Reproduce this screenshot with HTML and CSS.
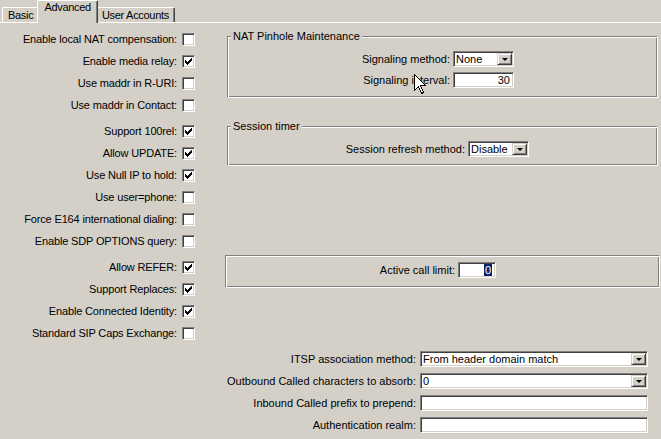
FILE: index.html
```html
<!DOCTYPE html>
<html>
<head>
<meta charset="utf-8">
<link rel="stylesheet" href="styles.css">
</head>
<body>
<div class="tabs">
  <div class="tab">Basic</div>
  <div class="tab tab-active">Advanced</div>
  <div class="tab">User Accounts</div>
</div>
<div class="panel">
  <div class="left">
    <div class="cbgroup">
      <div class="cbrow"><span class="cblabel">Enable local NAT compensation:</span><span class="cb"></span></div>
      <div class="cbrow"><span class="cblabel">Enable media relay:</span><span class="cb"><svg class="chk" width="7" height="7" viewBox="0 0 7 7"><path d="M6 0h1v1h-1zM5 1h2v1h-2zM0 2h1v1h-1zM4 2h3v1h-3zM0 3h2v1h-2zM3 3h3v1h-3zM0 4h5v1h-5zM1 5h3v1h-3zM2 6h1v1h-1z"/></svg></span></div>
      <div class="cbrow"><span class="cblabel">Use maddr in R-URI:</span><span class="cb"></span></div>
      <div class="cbrow"><span class="cblabel">Use maddr in Contact:</span><span class="cb"></span></div>
    </div>
    <div class="cbgroup">
      <div class="cbrow"><span class="cblabel">Support 100rel:</span><span class="cb"><svg class="chk" width="7" height="7" viewBox="0 0 7 7"><path d="M6 0h1v1h-1zM5 1h2v1h-2zM0 2h1v1h-1zM4 2h3v1h-3zM0 3h2v1h-2zM3 3h3v1h-3zM0 4h5v1h-5zM1 5h3v1h-3zM2 6h1v1h-1z"/></svg></span></div>
      <div class="cbrow"><span class="cblabel">Allow UPDATE:</span><span class="cb"><svg class="chk" width="7" height="7" viewBox="0 0 7 7"><path d="M6 0h1v1h-1zM5 1h2v1h-2zM0 2h1v1h-1zM4 2h3v1h-3zM0 3h2v1h-2zM3 3h3v1h-3zM0 4h5v1h-5zM1 5h3v1h-3zM2 6h1v1h-1z"/></svg></span></div>
      <div class="cbrow"><span class="cblabel">Use Null IP to hold:</span><span class="cb"><svg class="chk" width="7" height="7" viewBox="0 0 7 7"><path d="M6 0h1v1h-1zM5 1h2v1h-2zM0 2h1v1h-1zM4 2h3v1h-3zM0 3h2v1h-2zM3 3h3v1h-3zM0 4h5v1h-5zM1 5h3v1h-3zM2 6h1v1h-1z"/></svg></span></div>
      <div class="cbrow"><span class="cblabel">Use user=phone:</span><span class="cb"></span></div>
      <div class="cbrow"><span class="cblabel">Force E164 international dialing:</span><span class="cb"></span></div>
      <div class="cbrow"><span class="cblabel">Enable SDP OPTIONS query:</span><span class="cb"></span></div>
    </div>
    <div class="cbgroup">
      <div class="cbrow"><span class="cblabel">Allow REFER:</span><span class="cb"><svg class="chk" width="7" height="7" viewBox="0 0 7 7"><path d="M6 0h1v1h-1zM5 1h2v1h-2zM0 2h1v1h-1zM4 2h3v1h-3zM0 3h2v1h-2zM3 3h3v1h-3zM0 4h5v1h-5zM1 5h3v1h-3zM2 6h1v1h-1z"/></svg></span></div>
      <div class="cbrow"><span class="cblabel">Support Replaces:</span><span class="cb"><svg class="chk" width="7" height="7" viewBox="0 0 7 7"><path d="M6 0h1v1h-1zM5 1h2v1h-2zM0 2h1v1h-1zM4 2h3v1h-3zM0 3h2v1h-2zM3 3h3v1h-3zM0 4h5v1h-5zM1 5h3v1h-3zM2 6h1v1h-1z"/></svg></span></div>
      <div class="cbrow"><span class="cblabel">Enable Connected Identity:</span><span class="cb"><svg class="chk" width="7" height="7" viewBox="0 0 7 7"><path d="M6 0h1v1h-1zM5 1h2v1h-2zM0 2h1v1h-1zM4 2h3v1h-3zM0 3h2v1h-2zM3 3h3v1h-3zM0 4h5v1h-5zM1 5h3v1h-3zM2 6h1v1h-1z"/></svg></span></div>
      <div class="cbrow"><span class="cblabel">Standard SIP Caps Exchange:</span><span class="cb"></span></div>
    </div>
  </div>

  <div class="right">
    <div class="group group-nat">
      <div class="group-title">NAT Pinhole Maintenance</div>
      <div class="frow frow-first">
        <span class="flabel w-nat">Signaling method:</span>
        <div class="field combo w61"><span class="fval">None</span><span class="dropbtn"><span class="tri"></span></span></div>
      </div>
      <div class="frow frow-second">
        <span class="flabel w-nat">Signaling interval:</span>
        <div class="field w61 right-val"><span class="fval">30</span></div>
      </div>
    </div>

    <div class="group group-session">
      <div class="group-title">Session timer</div>
      <div class="frow frow-first">
        <span class="flabel w-session">Session refresh method:</span>
        <div class="field combo w61"><span class="fval">Disable</span><span class="dropbtn"><span class="tri"></span></span></div>
      </div>
    </div>

    <div class="frame">
      <div class="frow">
        <span class="flabel w-active">Active call limit:</span>
        <div class="field w38 right-val"><span class="fval sel">0</span></div>
      </div>
    </div>

    <div class="form">
      <div class="frow">
        <span class="flabel w-form">ITSP association method:</span>
        <div class="field combo w228"><span class="fval">From header domain match</span><span class="dropbtn"><span class="tri"></span></span></div>
      </div>
      <div class="frow">
        <span class="flabel w-form">Outbound Called characters to absorb:</span>
        <div class="field combo w228"><span class="fval">0</span><span class="dropbtn"><span class="tri"></span></span></div>
      </div>
      <div class="frow">
        <span class="flabel w-form">Inbound Called prefix to prepend:</span>
        <div class="field w228"></div>
      </div>
      <div class="frow">
        <span class="flabel w-form">Authentication realm:</span>
        <div class="field w228"></div>
      </div>
    </div>
  </div>
</div>
<svg class="cursor" width="13" height="21" viewBox="0 0 13 21"><path d="M0.5 0.5V16.5L4.5 12.5L7.5 19.5L9.5 18.5L6.5 11.5H11.5Z" fill="#fff" stroke="#000" stroke-width="1" shape-rendering="crispEdges"/></svg>
</body>
</html>
```
FILE: styles.css
```css
html, body {
  margin: 0;
  padding: 0;
}
body {
  background: #d4d0c8;
  font-family: "Liberation Sans", Arial, sans-serif;
  font-size: 11px;
  line-height: 13px;
  color: #000;
  width: 661px;
  height: 439px;
  overflow: hidden;
  position: relative;
}

/* Tabs */
.tabs {
  display: flex;
  align-items: flex-end;
  height: 22px;
  border-bottom: 1px solid #fff;
  padding-left: 2px;
}
.tab {
  height: 13px;
  padding: 1px 5px 0 5px;
  border-top: 1px solid #fff;
  border-left: 1px solid #fff;
  border-right: 1px solid #404040;
  box-shadow: inset -1px 0 0 #808080;
  border-radius: 2px 2px 0 0;
  background: #d4d0c8;
  white-space: nowrap;
  letter-spacing: -0.3px;
}
.tab-active {
  position: relative;
  z-index: 1;
  height: 19px;
  padding: 0 6px 3px 6px;
  margin: 0 -2px -1px -2px;
}

/* Panel */
.panel {
  display: grid;
  grid-template-columns: 195px 1fr;
  column-gap: 30px;
}

/* Left checkbox column */
.left {
  padding-top: 5px;
}
.cbgroup + .cbgroup {
  margin-top: 4px;
}
.cbrow {
  display: flex;
  align-items: center;
  height: 22px;
}
.cblabel {
  flex: 1;
  text-align: right;
  padding-right: 5px;
  white-space: nowrap;
  letter-spacing: -0.15px;
}
.cb {
  box-sizing: border-box;
  width: 13px;
  height: 13px;
  flex: 0 0 13px;
  background: #fff;
  border: 1px solid;
  border-color: #808080 #fff #fff #808080;
  box-shadow: inset 1px 1px 0 #404040, inset -1px -1px 0 #d4d0c8;
  display: flex;
  align-items: center;
  justify-content: center;
}
.chk {
  display: block;
  fill: #000;
  shape-rendering: crispEdges;
}

/* Right column */
.right {
  padding-top: 13px;
  display: flex;
  flex-direction: column;
}
.group {
  border: 1px solid;
  border-color: #808080 #fff #fff #808080;
  box-shadow: inset 1px 1px 0 #fff, inset -1px -1px 0 #808080;
  margin: 0 3px 0 2px;
}
.group-title {
  display: table;
  margin: -7px 0 0 3px;
  padding: 0 2px;
  background: #d4d0c8;
  line-height: 13px;
}
.group-nat {
  padding-bottom: 9px;
}
.group-session {
  margin-top: 28px;
  padding-bottom: 8px;
}
.frow-first {
  margin-top: 8px;
}
.frow-second {
  margin-top: 5px;
}
.frame {
  margin: 89px 1px 0 0;
  border: 1px solid;
  border-color: #808080 #fff #fff #808080;
  box-shadow: inset 1px 1px 0 #fff, inset -1px -1px 0 #808080;
  padding: 6px 0 9px 0;
}

.frow {
  display: flex;
  align-items: center;
  height: 16px;
}
.flabel {
  box-sizing: border-box;
  text-align: right;
  padding-right: 3px;
  white-space: nowrap;
}
.w-nat { flex: 0 0 225px; }
.w-session { flex: 0 0 240px; }
.w-active { flex: 0 0 232px; }
.w-form { flex: 0 0 195px; padding-right: 4px; }

.form {
  margin-top: 63px;
  display: flex;
  flex-direction: column;
  gap: 6px;
}

/* Fields */
.field {
  box-sizing: border-box;
  height: 16px;
  background: #fff;
  border: 1px solid;
  border-color: #808080 #fff #fff #808080;
  box-shadow: inset 1px 1px 0 #404040, inset -1px -1px 0 #d4d0c8;
  display: flex;
  align-items: center;
  padding: 1px 1px 1px 2px;
  white-space: nowrap;
  overflow: hidden;
}
.w61 { width: 61px; }
.w38 { width: 38px; }
.w228 { width: 228px; }
.fval {
  flex: 1;
  line-height: 12px;
}
.right-val {
  padding-right: 3px;
}
.right-val .fval {
  text-align: right;
}
.fval.sel {
  flex: 0 0 auto;
  margin-left: auto;
  background: #0a246a;
  color: #fff;
  padding: 0 1px;
}
.dropbtn {
  box-sizing: border-box;
  flex: 0 0 15px;
  width: 15px;
  height: 12px;
  background: #d4d0c8;
  border: 1px solid;
  border-color: #d4d0c8 #404040 #404040 #d4d0c8;
  box-shadow: inset 1px 1px 0 #fff, inset -1px -1px 0 #808080;
  display: flex;
  align-items: center;
  justify-content: center;
}
.tri {
  width: 0;
  height: 0;
  border-left: 3px solid transparent;
  border-right: 3px solid transparent;
  border-top: 3px solid #000;
}

/* Mouse pointer overlay */
.cursor {
  position: absolute;
  left: 414px;
  top: 74px;
}
```
